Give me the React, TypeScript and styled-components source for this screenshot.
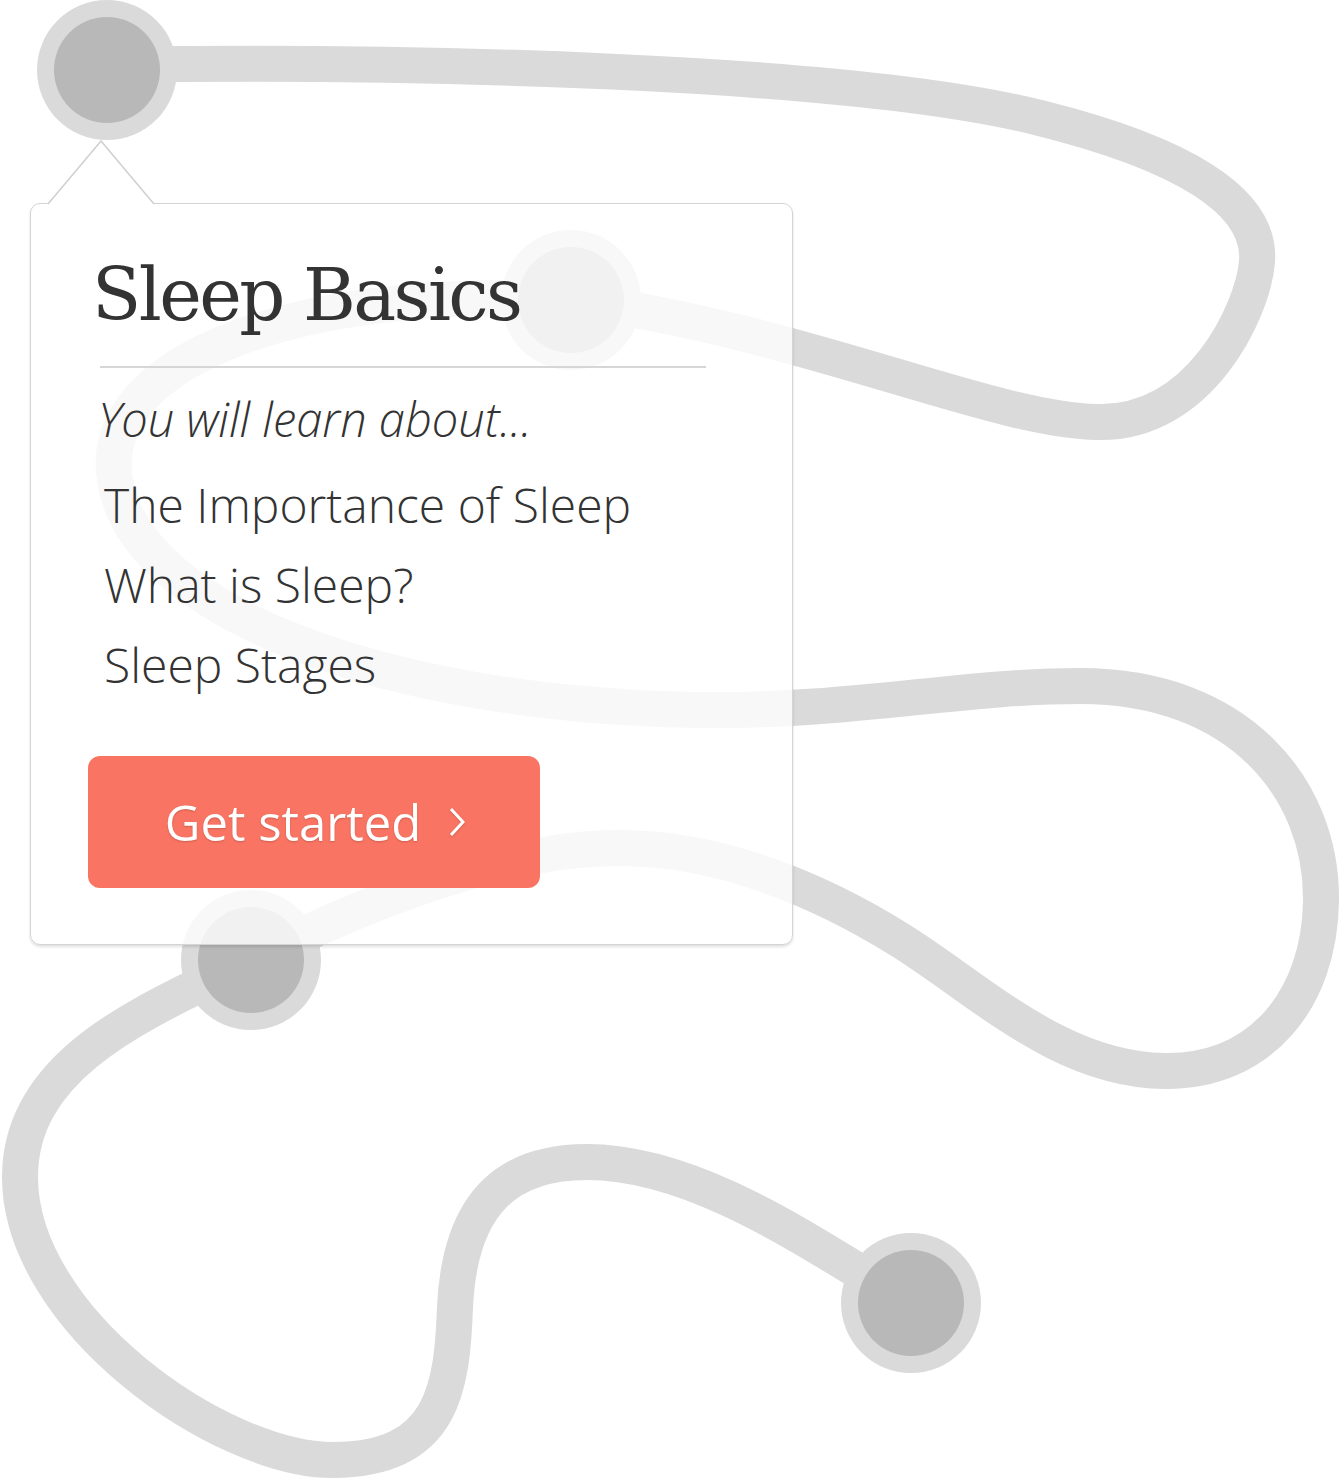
import styled, { createGlobalStyle } from 'styled-components';

const GlobalStyle = createGlobalStyle`
  html, body {
    margin: 0;
    padding: 0;
    background: #ffffff;
  }
  body {
    font-family: 'Open Sans', 'Liberation Sans', sans-serif;
  }
`;

const Canvas = styled.div`
  position: relative;
  width: 1340px;
  height: 1480px;
  overflow: hidden;
  background: #ffffff;
`;

const Track = styled.svg`
  position: absolute;
  inset: 0;
`;

const Card = styled.div`
  position: absolute;
  left: 30px;
  top: 203px;
  width: 763px;
  box-sizing: border-box;
  padding: 55px 0 56px 64px;
  display: flex;
  flex-direction: column;
  align-items: flex-start;
  background: rgba(255, 255, 255, 0.8);
  border: 1px solid #d4d4d4;
  border-radius: 10px;
  box-shadow: 0 2px 3px rgba(0, 0, 0, 0.12);
`;

const Pointer = styled.svg`
  position: absolute;
  left: 16px;
  top: -64px;
`;

const Title = styled.h1`
  margin: 0 0 0 -3px;
  font-family: 'DejaVu Serif', 'Liberation Serif', serif;
  font-weight: 400;
  font-size: 72px;
  line-height: 72px;
  letter-spacing: -2.6px;
  color: #333333;
`;

const Divider = styled.hr`
  margin: 35px 0 0 5px;
  width: 606px;
  height: 2px;
  border: none;
  background: #d6d6d6;
`;

const Lead = styled.p`
  margin: 11px 0 0 3px;
  font-style: italic;
  font-weight: 300;
  font-size: 47px;
  line-height: 80px;
  color: #333333;
`;

const TopicList = styled.ul`
  list-style: none;
  margin: 6px 0 0 9px;
  padding: 0;
`;

const Topic = styled.li`
  font-weight: 300;
  font-size: 48px;
  line-height: 80px;
  color: #333333;
`;

const StartButton = styled.button`
  margin: 51px 0 0 -7px;
  width: 452px;
  height: 132px;
  display: flex;
  align-items: center;
  justify-content: center;
  gap: 28px;
  padding: 0 0 0 2px;
  border: none;
  border-radius: 12px;
  background: #f97462;
  color: #ffffff;
  font-family: 'Open Sans', 'Liberation Sans', sans-serif;
  font-size: 49px;
  font-weight: 400;
  text-shadow: 0 1px 2px rgba(0, 0, 0, 0.18);
  cursor: pointer;
`;

const Chevron = styled.svg`
  filter: drop-shadow(0 1px 1px rgba(0, 0, 0, 0.15));
`;

const trackPath =
  'M107,65 C400,60 850,70 1040,118 C1180,153 1262,200 1257,262 C1253,310 1200,425 1097,422 ' +
  'C990,420 800,330 571,300 C300,285 95,360 115,480 C135,610 380,705 700,710 ' +
  'C850,712 960,686 1080,686 C1240,686 1322,790 1321,900 C1320,1000 1260,1072 1165,1071 ' +
  'C1060,1070 980,990 900,940 C820,890 720,848 620,848 C500,848 360,905 251,960 ' +
  'C150,1010 20,1060 20,1177 C20,1320 220,1460 333,1460 C445,1460 452,1385 455,1307 ' +
  'C460,1200 510,1162 587,1162 C700,1162 820,1250 911,1303';

const stops = [
  { x: 107, y: 70 },
  { x: 571, y: 300 },
  { x: 251, y: 960 },
  { x: 911, y: 1303 },
];

const topics = ['The Importance of Sleep', 'What is Sleep?', 'Sleep Stages'];

function App() {
  return (
    <Canvas>
      <GlobalStyle />
      <Track width="1340" height="1480" viewBox="0 0 1340 1480">
        <path d={trackPath} fill="none" stroke="#dadada" strokeWidth="36" />
        {stops.map((s) => (
          <g key={`${s.x}-${s.y}`}>
            <circle cx={s.x} cy={s.y} r="70" fill="#dadada" />
            <circle cx={s.x} cy={s.y} r="53" fill="#b8b8b8" />
          </g>
        ))}
      </Track>

      <Card>
        <Pointer width="108" height="66" viewBox="0 0 108 66">
          <polygon points="1,64 54,1 107,64" fill="#ffffff" />
          <polyline points="1,64 54,1 107,64" fill="none" stroke="#cfcfcf" strokeWidth="1.5" />
        </Pointer>
        <Title>Sleep Basics</Title>
        <Divider />
        <Lead>You will learn about...</Lead>
        <TopicList>
          {topics.map((t) => (
            <Topic key={t}>{t}</Topic>
          ))}
        </TopicList>
        <StartButton>
          Get started
          <Chevron width="16" height="30" viewBox="0 0 16 30">
            <polyline points="2,2 14,15 2,28" fill="none" stroke="#ffffff" strokeWidth="3" />
          </Chevron>
        </StartButton>
      </Card>
    </Canvas>
  );
}

export default App;
